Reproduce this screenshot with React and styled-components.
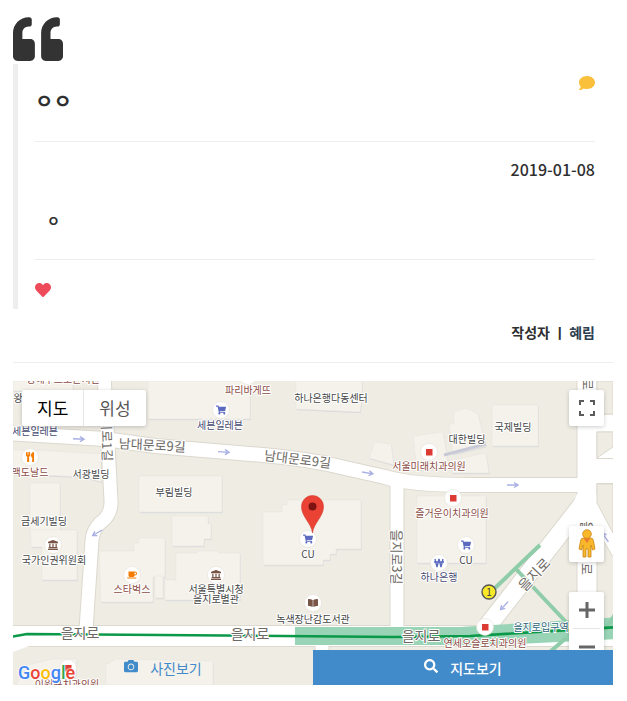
import React from "react";
import styled, { createGlobalStyle, css } from "styled-components";
import {
  FaQuoteLeft,
  FaHeart,
  FaComment,
  FaCamera,
  FaSearch,
  FaShoppingCart,
  FaUtensils,
  FaCoffee,
  FaLandmark,
  FaBookOpen,
} from "react-icons/fa";

const GlobalStyle = createGlobalStyle`
  *, *::before, *::after { box-sizing: border-box; }
  body {
    margin: 0;
    background: #fff;
    color: #2f2f2f;
    font-family: "Noto Sans CJK KR", "Noto Sans", sans-serif;
    font-size: 16px;
  }
`;

const Page = styled.main`
  padding: 14px 14px 16px 13px;
`;

const QuoteMark = styled(FaQuoteLeft)`
  display: block;
  width: 50px;
  height: 50px;
  color: #333;
`;

const Quote = styled.blockquote`
  margin: 0;
  padding: 11px 18px 11px 17px;
  border-left: 5px solid #eee;
`;

const IconButton = styled.button`
  display: block;
  width: 16px;
  height: 16px;
  margin-left: ${(p) => (p.$end ? "auto" : "0")};
  padding: 0;
  border: 0;
  background: none;
  color: ${(p) => p.$color};
  font-size: 16px;
  line-height: 0;
  cursor: pointer;
`;

const Title = styled.h1`
  margin: 0 0 30px;
  font-size: 20px;
  line-height: 20px;
  font-weight: 700;
`;

const Rule = styled.hr`
  height: 1px;
  margin: 0;
  border: 0;
  background: #eee;
`;

const DateLine = styled.time`
  display: block;
  margin: 17px 0 31px;
  text-align: right;
  font-size: 16px;
  line-height: 20px;
  font-weight: 500;
`;

const Body = styled.p`
  margin: 0 0 29px;
  padding-left: 12px;
  font-size: 14px;
  line-height: 20px;
  font-weight: 700;
`;

const Likes = styled.div`
  padding-top: 22px;
`;

const Author = styled.p`
  margin: 13px 0 20px;
  padding-right: 18px;
  text-align: right;
  font-size: 14px;
  line-height: 20px;
  font-weight: 700;
`;

const AuthorLink = styled.a`
  color: #2c3e50;
  text-decoration: none;
`;

const MapPanel = styled.section`
  position: relative;
  height: 304px;
  margin-top: 18px;
  overflow: hidden;
  background: #efece4;
`;

const MapDrawing = styled.svg`
  display: block;
  width: 100%;
  height: 100%;
`;

const floating = css`
  position: absolute;
  background: #fff;
  border-radius: 2px;
  box-shadow: 0 1px 4px rgba(0, 0, 0, 0.2);
`;

const MapTypes = styled.div`
  ${floating}
  top: 9px;
  left: 9px;
  display: flex;
`;

const MapType = styled.button`
  height: 36px;
  padding: 0 15px;
  border: 0;
  border-left: ${(p) => (p.$active ? "0" : "1px solid #e6e6e6")};
  background: none;
  color: ${(p) => (p.$active ? "#000" : "#565656")};
  font-family: inherit;
  font-size: 17px;
  line-height: 36px;
  cursor: pointer;
`;

const ControlCard = styled.div`
  ${floating}
  right: 9px;
  top: ${(p) => p.$top};
  width: 35px;
  display: grid;
`;

const Control = styled.button`
  display: grid;
  place-items: center;
  height: 36px;
  padding: 0;
  border: 0;
  background: none;
  cursor: pointer;
`;

const Divider = styled.span`
  height: 1px;
  margin: 0 4px;
  background: #e6e6e6;
`;

const Tabs = styled.nav`
  position: absolute;
  left: 0;
  right: 0;
  bottom: 0;
  display: grid;
  grid-template-columns: 1fr 1fr;
`;

const Tab = styled.a`
  display: flex;
  align-items: center;
  justify-content: center;
  gap: 12px;
  height: 35px;
  background: ${(p) => (p.$active ? "#428bca" : "transparent")};
  color: ${(p) => (p.$active ? "#fff" : "#428bca")};
  font-size: 14px;
  font-weight: ${(p) => (p.$active ? 500 : 400)};
  line-height: 20px;
  text-decoration: none;

  svg {
    width: 14px;
    height: 14px;
    margin-bottom: 4px;
  }
`;

const GoogleLogo = styled.a`
  position: absolute;
  left: 5px;
  bottom: 0;
  font-family: Roboto, sans-serif;
  font-size: 18px;
  line-height: 24px;
  font-weight: 500;
  text-decoration: none;
  text-shadow: 0 0 2px #fff, 0 0 2px #fff, 0 0 2px #fff;
`;

const Letter = styled.span`
  color: ${(p) => p.$color};
`;

const PlaceText = styled.text`
  fill: ${(p) => p.$color};
  stroke: #fff;
  stroke-width: 2px;
  stroke-linejoin: round;
  paint-order: stroke;
  font-size: 10px;
  text-anchor: middle;
`;

const RoadText = styled(PlaceText)`
  font-size: ${(p) => (p.$small ? "13px" : "14px")};
`;

const brown = "#8d4b44";
const dark = "#444";
const navy = "#44486f";

const buildings = [
  "13,381 73,381 73,391 13,391",
  "148,381 250,381 250,419 148,419",
  "296,381 362,381 362,398 360,412 296,409",
  "35,450 101,454 101,482 85,477 13,474 13,450",
  "30,483 60,483 60,530 76,530 76,540 30,540",
  "139,476 222,476 222,512 139,512",
  "172,516 208,516 208,524 211,524 211,539 204,539 204,546 172,546",
  "31,530 77,530 77,580 42,580 42,547 31,547",
  "99,551 134,551 134,543 139,543 139,538 165,538 165,577 153,577 153,602 101,602",
  "155,576 163,576 163,598 155,598",
  "176,553 197,553 197,551 219,551 219,553 240,553 240,600 165,600 165,580 176,580",
  "263,512 282,512 282,505 287,505 287,500 361,500 361,549 336,549 336,554 330,554 330,560 323,560 323,565 263,565",
  "375,442 391,444 394,465 369,458",
  "413,436 443,432 449,467 417,470",
  "449,424 454,424 454,412 466,408 478,414 486,446 453,454",
  "492,405 538,405 538,446 492,446",
  "452,460 486,453 489,473 452,473",
  "417,496 486,496 486,563 417,563",
  "28,665 52,659 77,659 75,685 16,685",
  "106,665 116,659 213,661 213,685 106,685",
];

const eastBlocks = [
  "597,414 613,414 613,381 597,381",
  "597,432 613,432 613,447 597,458",
  "597,484 613,484 613,533 597,503",
];

const roads = [
  { d: "M5 433L105 439L155 446L263 455Q310 459 345 468L385 477Q410 485 470 485H580", w: 14 },
  { d: "M104 376L108 445L111 500Q112 515 100 523Q93 530 92 540L86 630", w: 13 },
  { d: "M397 482V630", w: 13 },
  { d: "M587 376V630", w: 19 },
  { d: "M590 423H620", w: 17 },
  { d: "M590 471H620", w: 24 },
  { d: "M586 500L486 628", w: 18 },
  { d: "M589 500L620 552", w: 16 },
  { d: "M5 636H620", w: 20 },
  { d: "M322 640V655", w: 13 },
];

const roadNames = [
  { t: "남대문로9길", x: 152, y: 450, a: 3, s: true },
  { t: "남대문로9길", x: 297, y: 464, a: 7, s: true },
  { t: "지로1길", x: 102, y: 440, a: 88, s: true },
  { t: "을지로3길", x: 392, y: 557, a: 90, s: true },
  { t: "을지로", x: 80, y: 638, a: 0 },
  { t: "을지로", x: 250, y: 639, a: 0 },
  { t: "을지로", x: 421, y: 641, a: 0 },
  { t: "을지로", x: 538, y: 578, a: -47 },
  { t: "로", x: 582, y: 569, a: 90, s: true },
  { t: "을", x: 582, y: 527, a: 90, s: true },
  { t: "로", x: 583, y: 384, a: 90, s: true },
];

const places = [
  { t: "청해수프로본치킨", x: 63, y: 383, c: brown },
  { t: "왕", x: 18, y: 402, c: dark },
  { t: "파리바게뜨", x: 248, y: 394, c: brown },
  { t: "하나은행다동센터", x: 331, y: 402, c: dark },
  { t: "세븐일레븐", x: 220, y: 429, c: navy },
  { t: "세븐일레븐", x: 35, y: 435, c: navy },
  { t: "맥도날드", x: 30, y: 476, c: brown },
  { t: "서광빌딩", x: 91, y: 478, c: dark },
  { t: "금세기빌딩", x: 44, y: 525, c: dark },
  { t: "부림빌딩", x: 174, y: 496, c: dark },
  { t: "국가인권위원회", x: 54, y: 564, c: dark },
  { t: "스타벅스", x: 132, y: 593, c: brown },
  { t: "서울특별시청", x: 216, y: 593, c: dark },
  { t: "을지로별관", x: 216, y: 603, c: dark },
  { t: "CU", x: 308, y: 558, c: dark },
  { t: "녹색장난감도서관", x: 313, y: 623, c: dark },
  { t: "서울미래치과의원", x: 429, y: 470, c: brown },
  { t: "대한빌딩", x: 467, y: 443, c: dark },
  { t: "국제빌딩", x: 513, y: 431, c: dark },
  { t: "즐거운이치과의원", x: 452, y: 517, c: brown },
  { t: "CU", x: 466, y: 564, c: dark },
  { t: "하나은행", x: 439, y: 581, c: navy },
  { t: "연세오슬로치과의원", x: 485, y: 647, c: brown },
  { t: "을지로입구역", x: 541, y: 631, c: "#2d6579" },
  { t: "이원규치과의원", x: 67, y: 688, c: brown },
];

const pois = [
  { x: 221, y: 410, icon: FaShoppingCart, c: "#5c6bc0" },
  { x: 30, y: 457, icon: FaUtensils, c: "#f57c00" },
  { x: 53, y: 545, icon: FaLandmark, c: "#795548" },
  { x: 132, y: 575, icon: FaCoffee, c: "#f57c00" },
  { x: 216, y: 575, icon: FaLandmark, c: "#795548" },
  { x: 308, y: 539, icon: FaShoppingCart, c: "#5c6bc0" },
  { x: 313, y: 603, icon: FaBookOpen, c: "#795548" },
  { x: 466, y: 545, icon: FaShoppingCart, c: "#5c6bc0" },
  { x: 248, y: 376 },
  { x: 429, y: 452, clinic: true },
  { x: 453, y: 498, clinic: true },
  { x: 485, y: 627, clinic: true },
  { x: 68, y: 668, clinic: true },
  { x: 439, y: 563, won: true },
];

const arrows = [
  { x: 79, y: 439, a: 3 },
  { x: 224, y: 452, a: 4 },
  { x: 368, y: 473, a: 10 },
  { x: 513, y: 485, a: 0 },
  { x: 97, y: 533, a: 150 },
  { x: 504, y: 606, a: 133 },
  { x: 605, y: 537, a: 235 },
];

function Poi({ x, y, icon: Icon, c, clinic, won }) {
  return (
    <g>
      <circle cx={x} cy={y} r="8.5" fill="#fff" stroke="#e4e1d9" strokeWidth="0.6" />
      {Icon && <Icon x={x - 5} y={y - 5} size={10} color={c} />}
      {clinic && <rect x={x - 3} y={y - 3} width="6.5" height="6.5" fill="#db3b32" />}
      {won && (
        <path
          d={`M${x - 4} ${y - 4}l2 8 2-8 2 8 2-8M${x - 5} ${y - 1}h10`}
          fill="none"
          stroke="#5c6bc0"
          strokeWidth="1.4"
        />
      )}
    </g>
  );
}

function StreetMap() {
  return (
    <MapDrawing viewBox="13 381 600 304" preserveAspectRatio="xMidYMid slice" role="img" aria-label="지도">
      <rect x="-500" y="381" width="1700" height="304" fill="#efece4" />
      {buildings.map((p) => (
        <g key={p}>
          <polygon points={p} fill="#d9dadd" transform="translate(0.6 1.2)" />
          <polygon points={p} fill="#f4f2eb" stroke="#e9e6df" strokeWidth="0.6" />
        </g>
      ))}
      <path d="M444 455L486 444" stroke="#c9cad7" strokeWidth="3" />
      <path d="M597 381V505L620 545V381Z" fill="#fff" />
      {roads.map((r) => (
        <path key={r.d} d={r.d} fill="none" stroke="#dcd8cd" strokeWidth={r.w + 2} />
      ))}
      <polygon points="577,494 566,520 578,535 592,535 606,520 597,494" fill="#fff" />
      {roads.map((r) => (
        <path key={r.d} d={r.d} fill="none" stroke="#fff" strokeWidth={r.w} />
      ))}
      <polygon points="5,647 32,643 32,645 5,655" fill="#fff" />
      {eastBlocks.map((p) => (
        <polygon key={p} points={p} fill="#efece4" stroke="#dcd8cd" />
      ))}
      <polygon points="295,627 460,627 620,617 620,639 500,645 295,645" fill="#98d4b5" />
      <path d="M540 545L495 588M516 569L566 622M550 652L566 638M605 630L616 613" fill="none" stroke="#8fcca9" strokeWidth="4" />
      <path d="M5 638L27 634L160 635L395 637L470 636L620 627" fill="none" stroke="#0b9848" strokeWidth="2.6" />
      {arrows.map((a) => (
        <g key={a.x} transform={`translate(${a.x} ${a.y}) rotate(${a.a})`}>
          <path d="M-6 0H5M1 -2.5L5 0L1 2.5" fill="none" stroke="#a9b0e3" strokeWidth="1.4" />
        </g>
      ))}
      {roadNames.map((r) => (
        <RoadText
          key={`${r.t}${r.x}${r.y}`}
          $color="#6c6863"
          $small={r.s}
          x={r.x}
          y={r.y}
          transform={`rotate(${r.a} ${r.x} ${r.y})`}
        >
          {r.t}
        </RoadText>
      ))}
      {pois.map((p) => (
        <Poi key={`${p.x}-${p.y}`} {...p} />
      ))}
      <circle cx="489" cy="592" r="7" fill="#f7e928" stroke="#555" strokeWidth="1.4" />
      <text x="489" y="596" textAnchor="middle" fontSize="10" fill="#444">1</text>
      {places.map((p) => (
        <PlaceText key={`${p.t}${p.x}${p.y}`} $color={p.c} x={p.x} y={p.y}>
          {p.t}
        </PlaceText>
      ))}
      <path
        d="M312.500 533C311.500 523 301.500 517 301.500 506.500A11 11 0 0 1 323.500 506.500C323.500 517 313.500 523 312.500 533Z"
        fill="#ea4335"
        stroke="#d23a2e"
        strokeWidth="0.6"
      />
      <circle cx="312.500" cy="506.500" r="4" fill="#7d1411" />
    </MapDrawing>
  );
}

function Pegman() {
  return (
    <svg width="18" height="30" viewBox="0 0 18 30" aria-hidden="true">
      <path
        d="M5 9H13Q15 9 15.500 12L17 20L14.500 21L13 16V28H10V20H8V28H5V16L3.500 21L1 20L2.500 12Q3 9 5 9Z"
        fill="#f9b72b"
        stroke="#c98617"
        strokeWidth="0.8"
      />
      <circle cx="9" cy="5" r="4.300" fill="#fbb829" stroke="#c98617" strokeWidth="0.8" />
      <path d="M5.500 9.500L9 14L12.500 9.500Z" fill="#ed7c2e" />
    </svg>
  );
}

export default function App() {
  return (
    <Page>
      <GlobalStyle />
      <QuoteMark aria-hidden="true" />
      <Quote>
        <IconButton type="button" aria-label="댓글" $end $color="#fabf3b">
          <FaComment />
        </IconButton>
        <Title>ㅇㅇ</Title>
        <Rule />
        <DateLine dateTime="2019-01-08">2019-01-08</DateLine>
        <Body>ㅇ</Body>
        <Rule />
        <Likes>
          <IconButton type="button" aria-label="좋아요" $color="#ee4b5a">
            <FaHeart />
          </IconButton>
        </Likes>
      </Quote>
      <Author>
        작성자 ㅣ <AuthorLink href="#author">혜림</AuthorLink>
      </Author>
      <Rule />
      <MapPanel>
        <StreetMap />
        <GoogleLogo href="#google" aria-label="Google">
          <Letter $color="#4285f4">G</Letter>
          <Letter $color="#ea4335">o</Letter>
          <Letter $color="#fbbc05">o</Letter>
          <Letter $color="#4285f4">g</Letter>
          <Letter $color="#34a853">l</Letter>
          <Letter $color="#ea4335">e</Letter>
        </GoogleLogo>
        <MapTypes>
          <MapType type="button" $active>지도</MapType>
          <MapType type="button">위성</MapType>
        </MapTypes>
        <ControlCard $top="9px">
          <Control type="button" aria-label="전체 화면">
            <svg width="16" height="16" viewBox="0 0 16 16" fill="none" stroke="#5b5b5b" strokeWidth="2">
              <path d="M1 5V1H5M11 1H15V5M15 11V15H11M5 15H1V11" />
            </svg>
          </Control>
        </ControlCard>
        <ControlCard $top="145px">
          <Control type="button" aria-label="스트리트 뷰">
            <Pegman />
          </Control>
        </ControlCard>
        <ControlCard $top="211px">
          <Control type="button" aria-label="확대">
            <svg width="16" height="16" viewBox="0 0 16 16" stroke="#666" strokeWidth="3">
              <path d="M0 8H16M8 0V16" />
            </svg>
          </Control>
          <Divider />
          <Control type="button" aria-label="축소">
            <svg width="16" height="16" viewBox="0 0 16 16" stroke="#666" strokeWidth="3">
              <path d="M0 8H16" />
            </svg>
          </Control>
        </ControlCard>
        <Tabs>
          <Tab href="#photo">
            <FaCamera />
            사진보기
          </Tab>
          <Tab href="#map" $active>
            <FaSearch />
            지도보기
          </Tab>
        </Tabs>
      </MapPanel>
    </Page>
  );
}
